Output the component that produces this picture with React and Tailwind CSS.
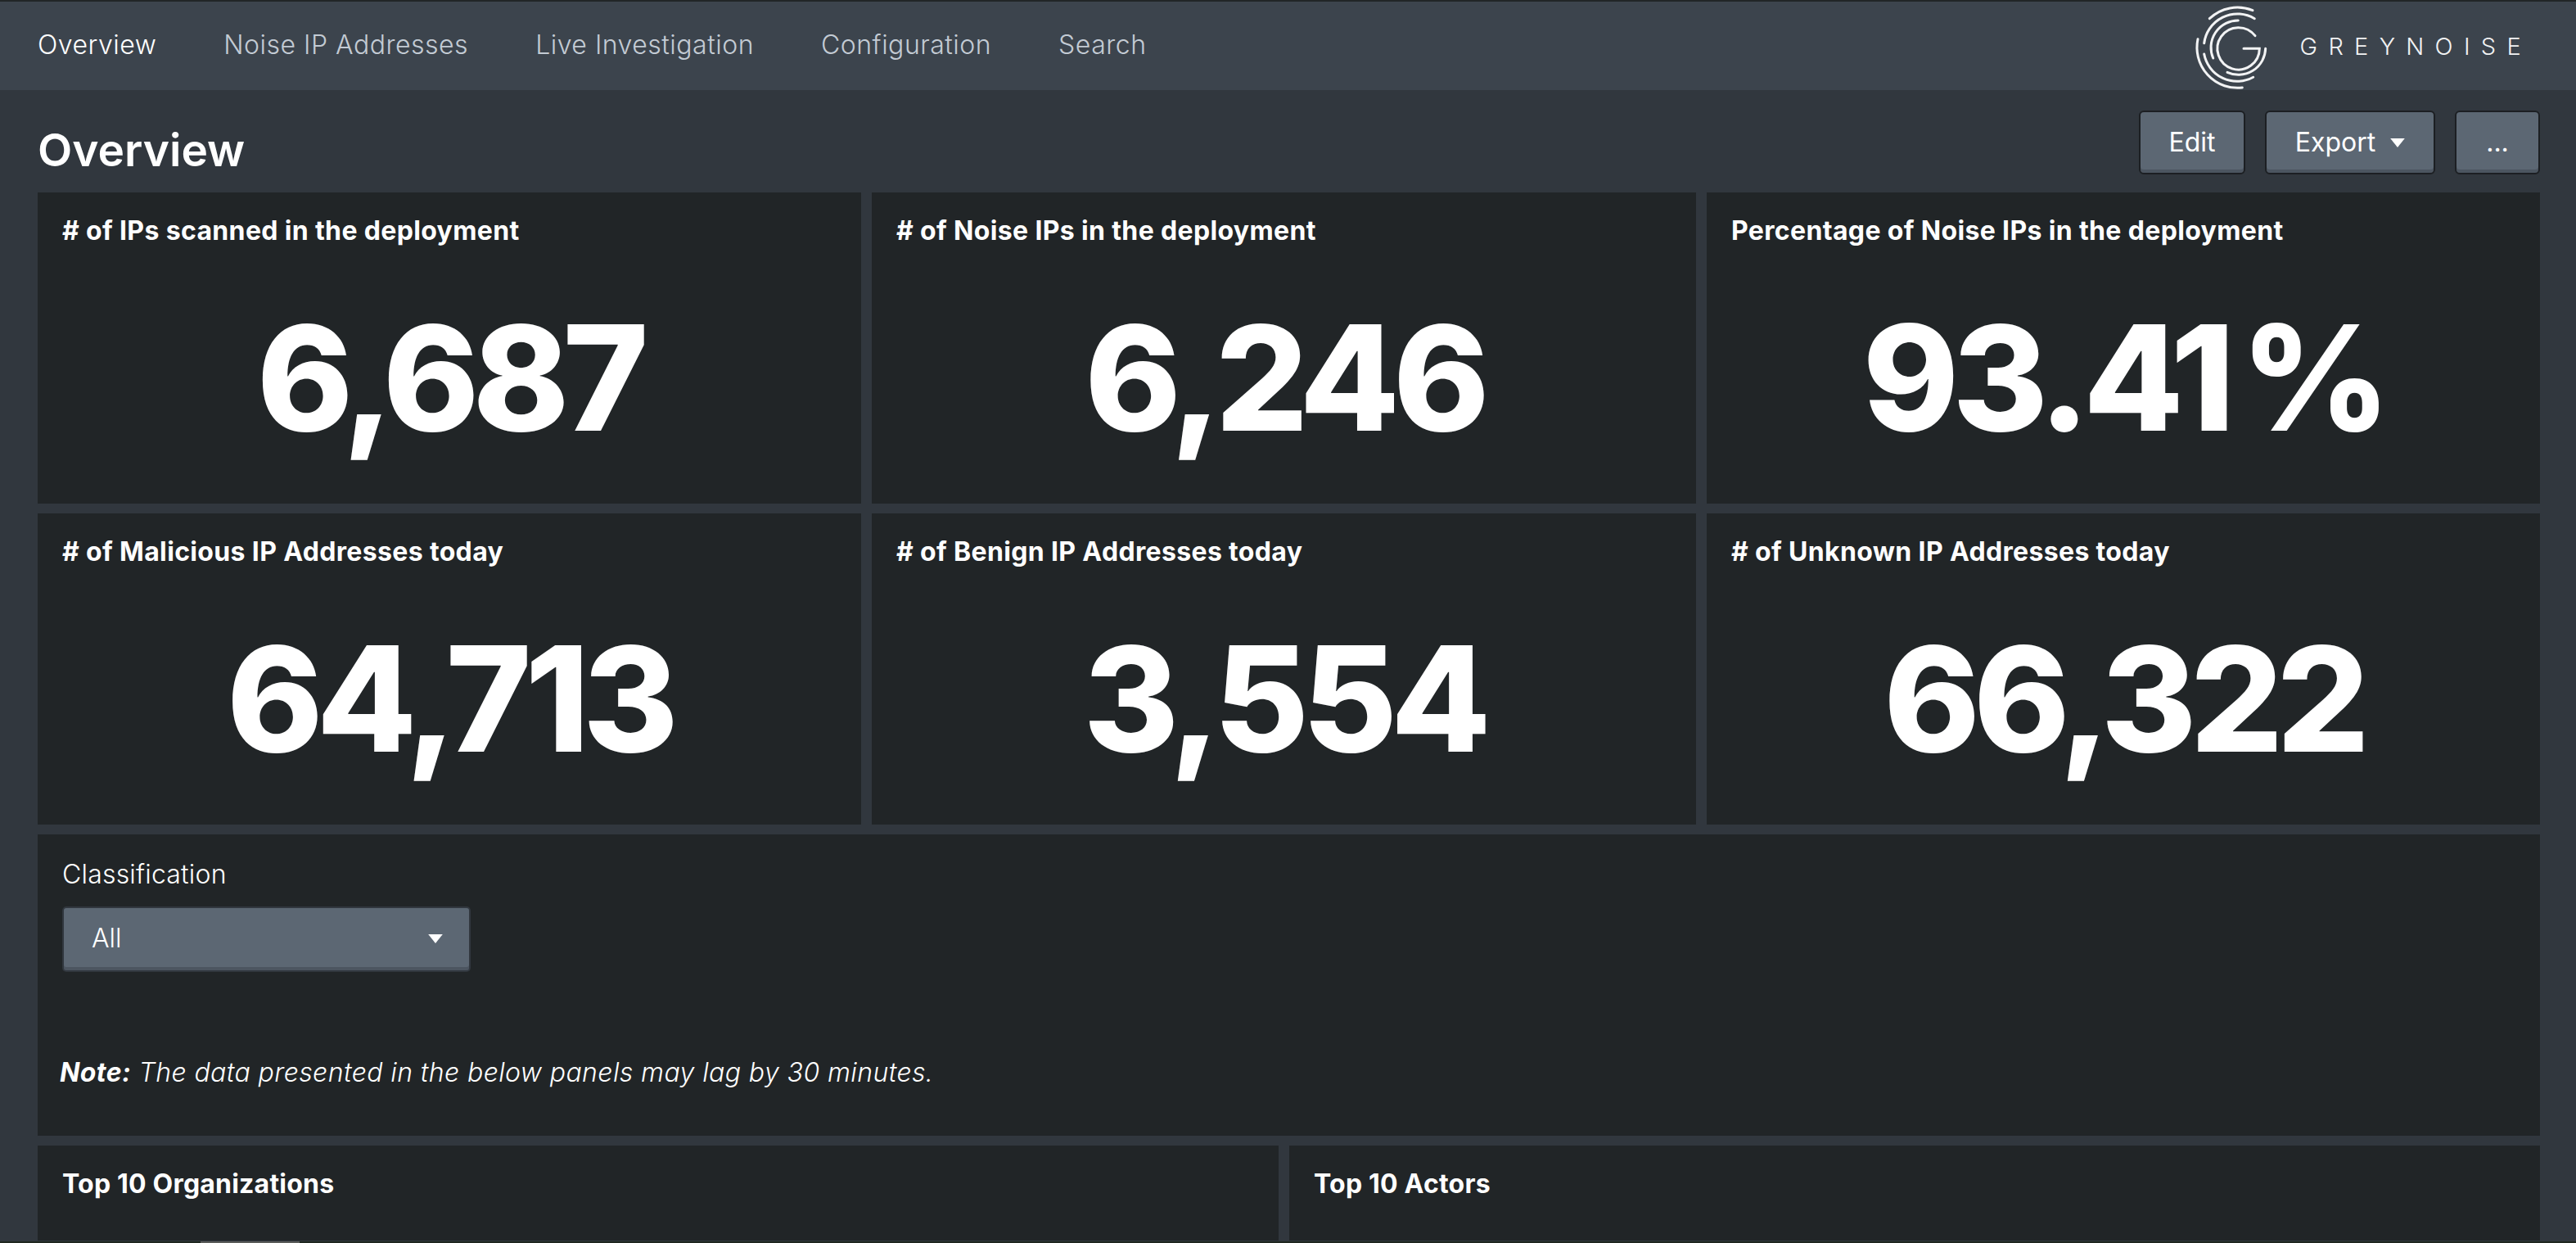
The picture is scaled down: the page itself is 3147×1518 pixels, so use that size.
import React from 'react';

const FONT = "font-['Inter',sans-serif]";

const navItems = ['Overview', 'Noise IP Addresses', 'Live Investigation', 'Configuration', 'Search'];

const topStats = [
  { title: '# of IPs scanned in the deployment', value: '6,687' },
  { title: '# of Noise IPs in the deployment', value: '6,246' },
  { title: 'Percentage of Noise IPs in the deployment', value: '93.41 %' },
  { title: '# of Malicious IP Addresses today', value: '64,713' },
  { title: '# of Benign IP Addresses today', value: '3,554' },
  { title: '# of Unknown IP Addresses today', value: '66,322' },
];

const Logo = () => (
  <svg width="130" height="110" viewBox="0 0 130 110" fill="none" stroke="#f2f3f4" strokeWidth="3" strokeLinecap="round">
    <path d="M84 42.7A25.7 25.7 0 1 0 89.3 58.3H70" />
    <path d="M63.3 24A33 33 0 0 0 32.7 70" />
    <path d="M50 87.3A33 33 0 0 0 96.7 58.3" />
    <path d="M83.3 21.7A41 41 0 0 0 21.7 51.7" />
    <path d="M21.7 65A41 41 0 0 0 81.7 93.3" />
    <path d="M81 11.7A49.5 49.5 0 0 0 28.3 21.7" />
    <path d="M14 46.7A49.5 49.5 0 0 0 68.3 106" />
  </svg>
);

const Caret = ({ className }) => (
  <svg className={className} viewBox="0 0 16 10" fill="#ffffff">
    <path d="M0 0h16L8 10z" />
  </svg>
);

const Btn = ({ children, className }) => (
  <button className={`h-[78px] rounded-[6px] border-2 border-[#1c1f23] bg-[#5c6773] shadow-[inset_0_-4px_0_#4c5560] text-[32px] text-white flex items-center justify-center ${className}`}>
    {children}
  </button>
);

const StatPanel = ({ title, value }) => (
  <div className="bg-[#212527] h-[380px] px-[30px] pt-[24px] flex flex-col">
    <h3 className="text-[32px] leading-[46px] font-bold text-white tracking-[0.35px]">{title}</h3>
    <div className="mt-[48px] text-center text-[178px] leading-[218px] font-extrabold text-white tracking-[-8px] [word-spacing:-16px]">{value}</div>
  </div>
);

export default function App() {
  return (
    <div className={`${FONT} relative h-[1518px] overflow-hidden bg-[#31373e] text-white`}>
      <nav className="h-[110px] border-t-2 border-[#212527] bg-[#3c444d] pl-[46px] pr-[54px] flex items-center justify-between">
        <div className="flex items-center gap-[82px] pb-[2px]">
          {navItems.map((item, i) => (
            <a key={item} className={`text-[32px] tracking-[0.5px] font-light ${i === 0 ? 'text-white' : 'text-[#c3cbd4]'}`}>{item}</a>
          ))}
        </div>
        <div className="flex items-center gap-[9px]">
          <Logo />
          <span className="text-[29px] leading-none font-light tracking-[13.3px] text-[#f2f3f4]">GREYNOISE</span>
        </div>
      </nav>

      <main className="pl-[46px] pr-[44px]">
        <div className="h-[125px] pt-[25px] flex justify-between">
          <h1 className="text-[55px] leading-[78px] pt-[9px] font-semibold">Overview</h1>
          <div className="flex gap-[24px]">
            <Btn className="w-[130px]">Edit</Btn>
            <Btn className="w-[208px] gap-[18px]">Export <Caret className="w-[18px] h-[11px]" /></Btn>
            <Btn className="w-[104px]">...</Btn>
          </div>
        </div>

        <div className="grid grid-cols-[1006px_1007px_1fr] gap-x-[13px] gap-y-[12px]">
          {topStats.map((s) => <StatPanel key={s.title} {...s} />)}
        </div>

        <section className="mt-[12px] h-[368px] bg-[#212527] px-[30px] pt-[26px]">
          <label className="block text-[32px] leading-[46px] font-light tracking-[0.2px]">Classification</label>
          <div className="mt-[16px] w-[499px] h-[80px] rounded-[5px] border-2 border-[#31373e] bg-[#5c6773] shadow-[inset_0_-4px_0_#4c5560] pl-[34px] pr-[32px] pb-[2px] flex items-center justify-between">
            <span className="text-[32px] font-light">All</span>
            <Caret className="w-[18px] h-[11px]" />
          </div>
          <p className="mt-[100px] -ml-[3px] text-[32px] leading-[46px] italic font-light tracking-[0.4px]">
            <strong className="font-bold">Note:</strong> The data presented in the below panels may lag by 30 minutes.
          </p>
        </section>

        <div className="mt-[12px] grid grid-cols-[1516px_1fr] gap-x-[13px]">
          {['Top 10 Organizations', 'Top 10 Actors'].map((t) => (
            <div key={t} className="h-[116px] bg-[#212527] px-[30px] pt-[24px]">
              <h3 className="text-[32px] leading-[46px] font-bold tracking-[0.2px]">{t}</h3>
            </div>
          ))}
        </div>
      </main>

      <div className="absolute inset-x-0 bottom-0 h-[2px] bg-[#1f271f]">
        <div className="ml-[245px] w-[121px] h-full bg-[#5a5c5a]" />
      </div>
    </div>
  );
}
